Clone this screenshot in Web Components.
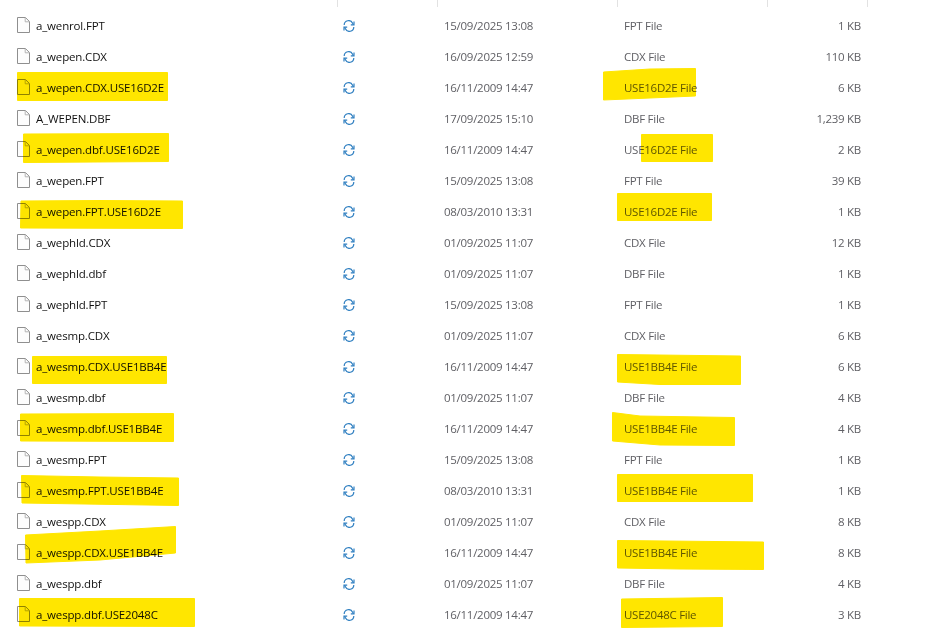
<!DOCTYPE html>
<html>
<head>
<meta charset="utf-8">
<title>Files</title>
<style>
  html, body { margin: 0; background: #fff; }
  body { width: 942px; height: 633px; overflow: hidden; position: relative; }
</style>
</head>
<body>
<file-list></file-list>
<marker-layer></marker-layer>
<script>
const FILES = [
  ["a_wenrol.FPT", "15/09/2025 13:08", "FPT File", "1 KB"],
  ["a_wepen.CDX", "16/09/2025 12:59", "CDX File", "110 KB"],
  ["a_wepen.CDX.USE16D2E", "16/11/2009 14:47", "USE16D2E File", "6 KB"],
  ["A_WEPEN.DBF", "17/09/2025 15:10", "DBF File", "1,239 KB"],
  ["a_wepen.dbf.USE16D2E", "16/11/2009 14:47", "USE16D2E File", "2 KB"],
  ["a_wepen.FPT", "15/09/2025 13:08", "FPT File", "39 KB"],
  ["a_wepen.FPT.USE16D2E", "08/03/2010 13:31", "USE16D2E File", "1 KB"],
  ["a_wephld.CDX", "01/09/2025 11:07", "CDX File", "12 KB"],
  ["a_wephld.dbf", "01/09/2025 11:07", "DBF File", "1 KB"],
  ["a_wephld.FPT", "15/09/2025 13:08", "FPT File", "1 KB"],
  ["a_wesmp.CDX", "01/09/2025 11:07", "CDX File", "6 KB"],
  ["a_wesmp.CDX.USE1BB4E", "16/11/2009 14:47", "USE1BB4E File", "6 KB"],
  ["a_wesmp.dbf", "01/09/2025 11:07", "DBF File", "4 KB"],
  ["a_wesmp.dbf.USE1BB4E", "16/11/2009 14:47", "USE1BB4E File", "4 KB"],
  ["a_wesmp.FPT", "15/09/2025 13:08", "FPT File", "1 KB"],
  ["a_wesmp.FPT.USE1BB4E", "08/03/2010 13:31", "USE1BB4E File", "1 KB"],
  ["a_wespp.CDX", "01/09/2025 11:07", "CDX File", "8 KB"],
  ["a_wespp.CDX.USE1BB4E", "16/11/2009 14:47", "USE1BB4E File", "8 KB"],
  ["a_wespp.dbf", "01/09/2025 11:07", "DBF File", "4 KB"],
  ["a_wespp.dbf.USE2048C", "16/11/2009 14:47", "USE2048C File", "3 KB"],
];

// marker strokes drawn by hand on top of the list
const STROKES = [
  "17.5,72.5 167.5,72.5 167.5,100.5 17.5,100.5",
  "23.5,134 168.5,133.5 168.5,161.5 23.5,162.5",
  "21,201 100,200.5 182.5,201 182.5,228.5 20.5,228",
  "32.5,356.5 166.5,356.5 166.5,383.5 32.5,383.5",
  "20.5,414 173.5,413.5 173.5,441.5 20.5,441",
  "21.5,475.5 100,477 178.5,478 178.5,505.5 22,503",
  "25.5,535 100,531 175.5,526.5 175.5,553 100,560 26,563",
  "19.5,598.5 194.5,598.5 194.5,626.5 19.5,626",
  "603.5,72 650,69 695.5,68.5 695.5,96 650,98 603.5,100",
  "641.5,134.5 712.5,134.5 712.5,161.5 641.5,161.5",
  "617.5,193.5 711.5,193.5 711.5,220.5 617.5,220.5",
  "617.5,354.5 740.5,356 740.5,384.5 660,384.5 617.5,382",
  "612.5,412.5 640,416 734.5,417.5 734.5,445.5 660,445 612.5,441",
  "617.5,474.5 752.5,474.5 752.5,501.5 617.5,501.5",
  "617.5,540.5 763.5,542 763.5,569.5 680,569 617.5,568",
  "621.5,599 722.5,597.5 722.5,626.5 621.5,627.5",
];

class FileIcon extends HTMLElement {
  constructor() {
    super();
    this.attachShadow({ mode: "open" });
    this.shadowRoot.innerHTML = /*html*/ `
      <style>
        :host { display: block; width: 13px; height: 16px; margin-top: -2px; }
        svg { display: block; }
      </style>
      <svg width="13" height="16" viewBox="0 0 13 16" fill="none">
        <path d="M.5.5H8.4L12.5 4.6V15.5H.5Z" fill="#fdfdfd" stroke="#8f8f8f"/>
        <path d="M8.2 .8V4.8H12.3" stroke="#b4b4b4"/>
      </svg>`;
  }
}
customElements.define("file-icon", FileIcon);

class SyncIcon extends HTMLElement {
  constructor() {
    super();
    this.attachShadow({ mode: "open" });
    this.shadowRoot.innerHTML = /*html*/ `
      <style>
        :host { display: block; width: 12px; height: 12px; }
        svg { display: block; }
      </style>
      <svg width="12" height="12" viewBox="0 0 12 12" fill="none" stroke="#2f7fc1" stroke-width="1.2">
        <path d="M1.2 5A4.4 4.4 0 0 1 9.6 3.2L10.4 4.6"/>
        <path d="M10.8 7A4.4 4.4 0 0 1 2.4 8.8L1.6 7.4"/>
        <path d="M11 1.6V4.8H7.8"/>
        <path d="M1 10.4V7.2H4.2"/>
      </svg>`;
  }
}
customElements.define("sync-icon", SyncIcon);

class FileRow extends HTMLElement {
  constructor() {
    super();
    this.attachShadow({ mode: "open" });
  }
  connectedCallback() {
    this.shadowRoot.innerHTML = /*html*/ `
      <style>
        :host {
          display: grid;
          grid-template-columns: 19px 307px 101px 180px 156px 81px;
          align-items: center;
          height: 31px;
          font: 11.5px/16px "Open Sans", "Noto Sans", sans-serif;
          letter-spacing: -0.27px;
          color: #5f5f64;
          white-space: nowrap;
        }
        .name { color: #111; letter-spacing: -0.16px; }
        .size { text-align: right; }
      </style>
      <file-icon></file-icon>
      <span class="name">${this.getAttribute("name")}</span>
      <sync-icon></sync-icon>
      <span class="date">${this.getAttribute("date")}</span>
      <span class="type">${this.getAttribute("type")}</span>
      <span class="size">${this.getAttribute("size")}</span>`;
  }
}
customElements.define("file-row", FileRow);

class FileList extends HTMLElement {
  constructor() {
    super();
    this.attachShadow({ mode: "open" });
    const rows = FILES.map(f =>
      `<file-row name="${f[0]}" date="${f[1]}" type="${f[2]}" size="${f[3]}"></file-row>`
    ).join("");
    this.shadowRoot.innerHTML = /*html*/ `
      <style>
        :host { display: block; }
        .head { display: flex; height: 7px; padding-left: 337px; overflow: hidden; }
        .head i { display: block; height: 7px; box-sizing: border-box; border-left: 1px solid #e2e2e2; }
        .rows { padding: 3.5px 0 0 17px; }
      </style>
      <div class="head">
        <i style="width:100px"></i><i style="width:180px"></i><i style="width:150px"></i><i style="width:100px"></i><i></i>
      </div>
      <div class="rows">${rows}</div>`;
  }
}
customElements.define("file-list", FileList);

class MarkerLayer extends HTMLElement {
  constructor() {
    super();
    this.attachShadow({ mode: "open" });
    const polys = STROKES.map(p => `<polygon points="${p}"/>`).join("");
    this.shadowRoot.innerHTML = /*html*/ `
      <style>
        :host { position: absolute; inset: 0; mix-blend-mode: multiply; pointer-events: none; }
        svg { display: block; }
      </style>
      <svg width="942" height="633" fill="#ffe600" stroke="#ffe600" stroke-width="1" stroke-linejoin="round">${polys}</svg>`;
  }
}
customElements.define("marker-layer", MarkerLayer);
</script>
</body>
</html>
